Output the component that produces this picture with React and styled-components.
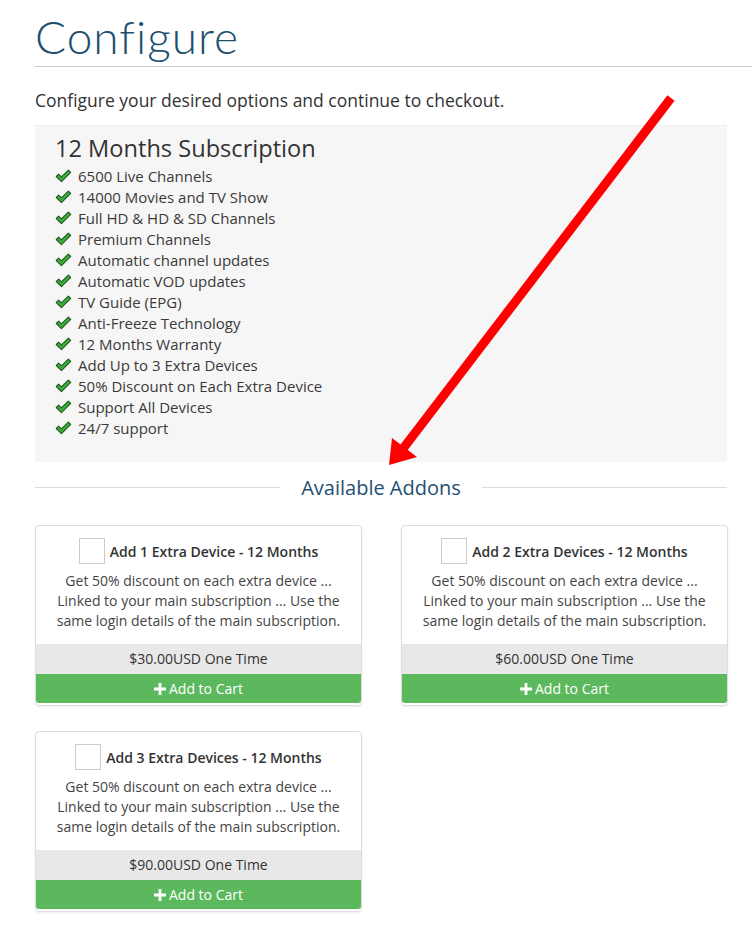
import React from "react";
import styled, { createGlobalStyle } from "styled-components";

const GlobalStyle = createGlobalStyle`
  html, body {
    margin: 0;
    padding: 0;
    background: #fff;
  }
  body {
    font-family: "Open Sans", "Noto Sans", sans-serif;
    color: #333;
  }
`;

const features = [
  "6500 Live Channels",
  "14000 Movies and TV Show",
  "Full HD & HD & SD Channels",
  "Premium Channels",
  "Automatic channel updates",
  "Automatic VOD updates",
  "TV Guide (EPG)",
  "Anti-Freeze Technology",
  "12 Months Warranty",
  "Add Up to 3 Extra Devices",
  "50% Discount on Each Extra Device",
  "Support All Devices",
  "24/7 support",
];

const addons = [
  { title: "Add 1 Extra Device - 12 Months", price: "$30.00USD One Time" },
  { title: "Add 2 Extra Devices - 12 Months", price: "$60.00USD One Time" },
  { title: "Add 3 Extra Devices - 12 Months", price: "$90.00USD One Time" },
];

const desc =
  "Get 50% discount on each extra device ... Linked to your main subscription ... Use the same login details of the main subscription.";

function Check() {
  return (
    <CheckIcon viewBox="0 0 20 16">
      <path
        d="M1.5 8.6 L4.3 5.8 L7.6 9.1 L15.7 1 L18.5 3.8 L7.6 14.7 Z"
        fill="#3fae3f"
        stroke="#1c5a1c"
        strokeWidth="1.3"
        strokeLinejoin="round"
      />
    </CheckIcon>
  );
}

function Plus() {
  return (
    <PlusIcon viewBox="0 0 12 12">
      <path d="M4.6 0h2.8v4.6H12v2.8H7.4V12H4.6V7.4H0V4.6h4.6z" fill="#fff" />
    </PlusIcon>
  );
}

export default function App() {
  return (
    <>
      <GlobalStyle />
      <Page>
        <Header>
          <Title>Configure</Title>
        </Header>
        <Intro>Configure your desired options and continue to checkout.</Intro>
        <ProductBox>
          <ProductName>12 Months Subscription</ProductName>
          <FeatureList>
            {features.map((f) => (
              <Feature key={f}>
                <Check />
                {f}
              </Feature>
            ))}
          </FeatureList>
        </ProductBox>
        <SectionTitle>
          <span>Available Addons</span>
        </SectionTitle>
        <AddonGrid>
          {addons.map((a) => (
            <AddonCard key={a.title}>
              <AddonBody>
                <AddonLabel>
                  <Box />
                  {a.title}
                </AddonLabel>
                <AddonDesc>{desc}</AddonDesc>
              </AddonBody>
              <Price>{a.price}</Price>
              <CartButton>
                <Plus />
                Add to Cart
              </CartButton>
            </AddonCard>
          ))}
        </AddonGrid>
        <Arrow viewBox="0 0 752 925">
          <line x1="671" y1="98" x2="402" y2="450" stroke="#f00" strokeWidth="9" />
          <polygon points="389,465 392,438 417,457" fill="#f00" />
        </Arrow>
      </Page>
    </>
  );
}

const Page = styled.div`
  position: relative;
  padding: 0 25px 20px 35px;
`;

const Header = styled.div`
  margin-right: -25px;
  border-bottom: 1px solid #c8c8c8;
  padding-top: 12px;
  height: 54px;
`;

const Title = styled.h1`
  margin: 0;
  font-family: "Lato", "Open Sans", sans-serif;
  font-weight: 300;
  font-size: 46px;
  line-height: 50px;
  color: #1d4e6e;
  letter-spacing: 1px;
`;

const Intro = styled.p`
  margin: 22px 0 0;
  font-size: 17.5px;
  line-height: 22px;
  color: #333;
`;

const ProductBox = styled.div`
  margin-top: 14px;
  background: #f7f6f6;
  border-top: 1px solid #efefef;
  padding: 6px 20px 23px;
  height: 307px;
`;

const ProductName = styled.h3`
  margin: 0;
  font-weight: 400;
  font-size: 23.6px;
  line-height: 33px;
  color: #333;
`;

const FeatureList = styled.ul`
  list-style: none;
  margin: 0;
  padding: 0;
`;

const Feature = styled.li`
  display: flex;
  align-items: center;
  height: 21px;
  font-size: 15px;
  color: #3a3a3a;
`;

const CheckIcon = styled.svg`
  width: 17px;
  height: 14px;
  margin-right: 6px;
  flex-shrink: 0;
`;

const SectionTitle = styled.div`
  display: flex;
  align-items: center;
  margin-top: 12px;
  height: 26px;
  font-size: 20px;
  color: #1f5073;
  &::before,
  &::after {
    content: "";
    flex: 1;
    border-top: 1px solid #dcdcdc;
  }
  span {
    padding: 0 21px;
  }
`;

const AddonGrid = styled.div`
  display: grid;
  grid-template-columns: 327px 327px;
  column-gap: 39px;
  row-gap: 25px;
  margin-top: 25px;
`;

const AddonCard = styled.div`
  border: 1px solid #ddd;
  border-radius: 4px;
  box-shadow: 0 1px 2px rgba(0, 0, 0, 0.08);
  overflow: hidden;
  display: flex;
  flex-direction: column;
  padding-bottom: 2px;
`;

const AddonBody = styled.div`
  padding: 12px 8px 13px;
  text-align: center;
`;

const AddonLabel = styled.div`
  display: flex;
  align-items: center;
  justify-content: center;
  font-size: 14px;
  font-weight: 600;
  color: #333;
`;

const Box = styled.span`
  width: 24px;
  height: 24px;
  border: 1px solid #ccc;
  margin-right: 5px;
  background: #fff;
`;

const AddonDesc = styled.p`
  margin: 7px 0 0;
  font-size: 14px;
  line-height: 20px;
  color: #444;
`;

const Price = styled.div`
  background: #e8e8e8;
  height: 30px;
  line-height: 30px;
  text-align: center;
  font-size: 14px;
  color: #333;
`;

const CartButton = styled.button`
  display: flex;
  align-items: center;
  justify-content: center;
  height: 29px;
  border: none;
  border-radius: 0 0 3px 3px;
  background: #5cb85c;
  color: #fff;
  font-family: "Open Sans", sans-serif;
  font-size: 14px;
  cursor: pointer;
`;

const PlusIcon = styled.svg`
  width: 12px;
  height: 12px;
  margin-right: 3px;
`;

const Arrow = styled.svg`
  position: absolute;
  left: 0;
  top: 0;
  width: 752px;
  height: 925px;
  pointer-events: none;
`;
